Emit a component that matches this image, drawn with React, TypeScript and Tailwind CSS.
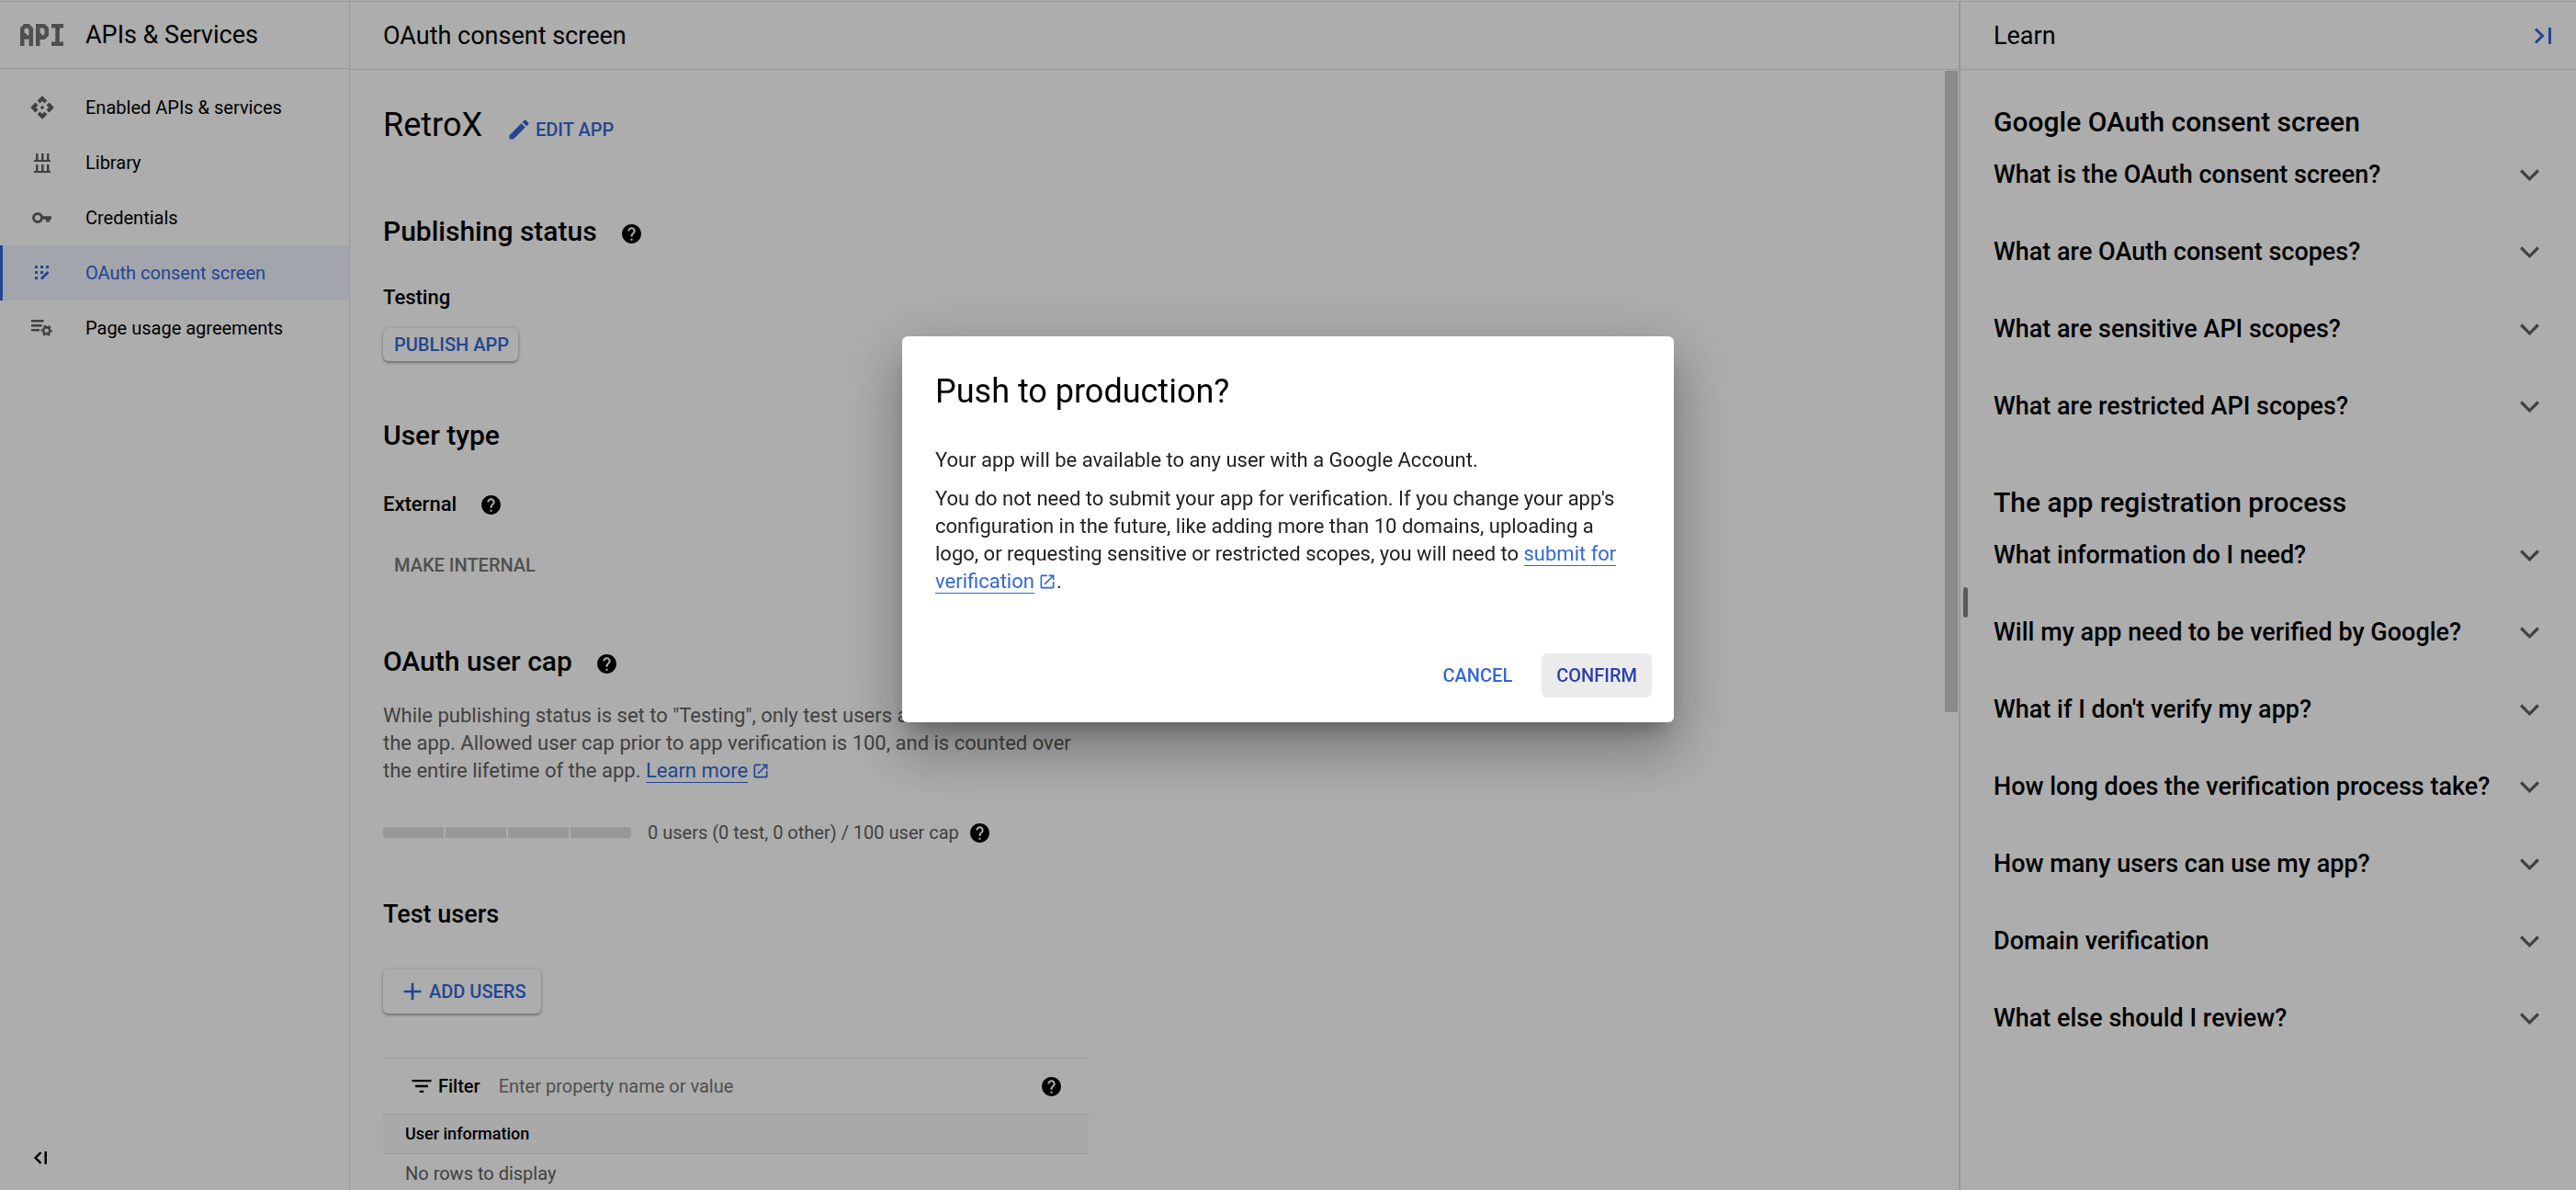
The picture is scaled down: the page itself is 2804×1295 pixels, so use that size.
import { useState } from 'react'
import type { ReactNode } from 'react'
import { MdApi, MdAdd, MdEdit, MdFilterList, MdHelp, MdOpenInNew } from 'react-icons/md'

function ApiLogo() {
  return (
    <svg viewBox="0 0 47 24" className="h-6 w-[47px] text-[#757575]" fill="none" stroke="currentColor" strokeWidth="4.5" aria-hidden="true">
      <path d="M2.250 24V5.500l3-3.250h3.500l3 3.250V24M2.250 14.500h9.500" />
      <path d="M19.250 24V2.250h6.500l3 3v6.500l-3 3h-6.500" />
      <path d="M34 2.250h13M34 21.750h13M40.500 2v20" />
      <path d="M4.500 12.300v-3l3 3zM21.500 12.500v-3l3 3zM38.500 4.500h4v2.500z" fill="#4a4a4a" stroke="none" />
    </svg>
  )
}

function LibraryIcon() {
  return (
    <svg viewBox="0 0 18 21" className="h-[21px] w-[18px]" fill="currentColor" aria-hidden="true">
      <path d="M2 0h2.500v7H8V0h2.500v7H14V0h2.500v7H18v2H0V7h2zM2 12h2.500v7H8v-7h2.500v7H14v-7h2.500v7H18v2H0v-2h2z" />
    </svg>
  )
}

function KeyIcon() {
  return (
    <svg viewBox="0 0 21 12" className="h-3 w-[21px]" fill="currentColor" aria-hidden="true">
      <circle cx="6" cy="6" r="4.500" fill="none" stroke="currentColor" strokeWidth="3" />
      <path d="M11 4.300h10v3.500h-1.700V10.500H15V7.800h-4z" />
    </svg>
  )
}

function ConsentIcon() {
  return (
    <svg viewBox="0 0 16 16" className="size-4" fill="currentColor" aria-hidden="true">
      <path d="M0 0h3v3H0zM6 0h3v3H6zM12 0h3v3h-3zM0 6h3v3H0zM6 6h3v3H6zM0 12h3v3H0z" />
      <path d="M6.500 13l7-7 2 2-7 7h-2z" />
    </svg>
  )
}

function AgreementsIcon() {
  return (
    <svg viewBox="0 0 23 18" className="h-[18px] w-[23px]" fill="currentColor" aria-hidden="true">
      <path d="M0 0h13.500v2.400H0zM0 5h11.500v2.400H0zM0 10h9v2.400H0z" />
      <circle cx="16.700" cy="11.800" r="3.500" fill="none" stroke="currentColor" strokeWidth="2.400" />
      <circle cx="16.700" cy="11.800" r="5.200" fill="none" stroke="currentColor" strokeWidth="1.800" strokeDasharray="2.900 2.545" strokeDashoffset="1.450" />
    </svg>
  )
}

function HidePanelIcon() {
  return (
    <svg viewBox="0 0 20 18" className="h-[18px] w-5" fill="none" stroke="currentColor" strokeWidth="3" aria-hidden="true">
      <path d="M2 1.500L9.500 9 2 16.500M17.500 0v18" />
    </svg>
  )
}

function CollapseMenuIcon() {
  return (
    <svg viewBox="0 0 14 14" className="size-3.5" fill="none" stroke="currentColor" strokeWidth="2.500" aria-hidden="true">
      <path d="M7.500 1L1.700 7l5.800 6M12.700 0v14" />
    </svg>
  )
}

function ChevronDown() {
  return (
    <svg viewBox="0 0 21 13" className="h-[13px] w-[21px] text-[#616161]" fill="none" stroke="currentColor" strokeWidth="3.200" aria-hidden="true">
      <path d="M1.200 1.500l9.300 9.300 9.300-9.300" />
    </svg>
  )
}

const navItems: { label: string; icon: ReactNode; active?: boolean }[] = [
  { label: 'Enabled APIs & services', icon: <MdApi className="size-7" /> },
  { label: 'Library', icon: <LibraryIcon /> },
  { label: 'Credentials', icon: <KeyIcon /> },
  { label: 'OAuth consent screen', icon: <ConsentIcon />, active: true },
  { label: 'Page usage agreements', icon: <AgreementsIcon /> },
]

const learnSections = [
  {
    title: 'Google OAuth consent screen',
    questions: [
      'What is the OAuth consent screen?',
      'What are OAuth consent scopes?',
      'What are sensitive API scopes?',
      'What are restricted API scopes?',
    ],
  },
  {
    title: 'The app registration process',
    questions: [
      'What information do I need?',
      'Will my app need to be verified by Google?',
      "What if I don't verify my app?",
      'How long does the verification process take?',
      'How many users can use my app?',
      'Domain verification',
      'What else should I review?',
    ],
  },
]

function Help({ label }: { label: string }) {
  return (
    <button type="button" aria-label={label} className="shrink-0">
      <MdHelp className="size-[25px]" />
    </button>
  )
}

function SectionHeading({ children, help }: { children: ReactNode; help: string }) {
  return (
    <div className="flex h-11 items-center gap-[25px]">
      <h3 className="text-[30px] leading-11 font-medium">{children}</h3>
      <div className="flex pt-1">
        <Help label={help} />
      </div>
    </div>
  )
}

function ExternalLink({ children }: { children: ReactNode }) {
  return (
    <a href="#" className="text-[#3367d6]">
      <span className="border-b border-[#3367d6]">{children}</span>
      <MdOpenInNew className="ml-1 inline size-5 align-[-3px]" />
    </a>
  )
}

function Sidebar() {
  return (
    <aside className="flex w-[381px] shrink-0 flex-col border-r border-[#e0e0e0]">
      <div className="flex h-[73px] shrink-0 items-center gap-6 border-b border-[#e0e0e0] pl-[22px]">
        <ApiLogo />
        <span className="text-[27px] leading-9">APIs &amp; Services</span>
      </div>
      <nav className="flex flex-col pt-3">
        {navItems.map((item) => (
          <a
            key={item.label}
            href="#"
            aria-current={item.active ? 'page' : undefined}
            className={
              item.active
                ? 'flex h-15 items-center border-l-3 border-[#3367d6] bg-[#f0f4ff] text-[#3367d6]'
                : 'flex h-15 items-center border-l-3 border-transparent'
            }
          >
            <span className={item.active ? 'flex w-[90px] justify-center pr-[5px]' : 'flex w-[90px] justify-center pr-[5px] text-[#616161]'}>
              {item.icon}
            </span>
            <span className="text-[20px] leading-7">{item.label}</span>
          </a>
        ))}
      </nav>
      <button type="button" aria-label="Collapse menu" className="mt-auto mb-7 ml-[37px] self-start">
        <CollapseMenuIcon />
      </button>
    </aside>
  )
}

function LearnPanel() {
  return (
    <aside className="relative flex w-[672px] shrink-0 flex-col border-l-2 border-[#e0e0e0]">
      <div className="absolute top-[637px] left-[3px] h-[33px] w-[5px] rounded-full bg-[#80868b]" />
      <header className="flex h-[74px] shrink-0 items-center justify-between border-b border-[#e0e0e0] pr-[26px] pl-9">
        <h2 className="text-[27px] leading-9">Learn</h2>
        <button type="button" aria-label="Hide panel" className="text-[#3367d6]">
          <HidePanelIcon />
        </button>
      </header>
      <div className="flex flex-col gap-5 pt-9 pr-10 pl-9">
        {learnSections.map((section) => (
          <section key={section.title}>
            <h3 className="text-[30px] leading-[42px] font-medium">{section.title}</h3>
            <ul className="pt-4">
              {section.questions.map((q) => (
                <li key={q} className="h-21">
                  <button type="button" className="flex w-full items-center justify-between py-1 text-left text-[27px] leading-8 font-medium">
                    {q}
                    <ChevronDown />
                  </button>
                </li>
              ))}
            </ul>
          </section>
        ))}
      </div>
    </aside>
  )
}

const raised = 'rounded-md bg-white shadow-[0_2px_3px_rgba(0,0,0,0.3),0_0_4px_rgba(0,0,0,0.15)]'

function Consent() {
  return (
    <main className="flex min-w-0 flex-1 flex-col">
      <header className="flex h-[74px] shrink-0 items-center border-b border-[#e0e0e0] pl-9">
        <h1 className="text-[27px] leading-9">OAuth consent screen</h1>
      </header>
      <div className="flex min-h-0 flex-1">
        <div className="flex w-[804px] flex-col pl-9 *:shrink-0">
          <div className="mt-9 flex h-12 items-center gap-[26px]">
            <h2 className="text-[36px] leading-12">RetroX</h2>
            <button type="button" className="flex items-center gap-1 pt-2.5 text-[20px] leading-7 font-medium text-[#3367d6]">
              <MdEdit className="size-7" />
              EDIT APP
            </button>
          </div>

          <div className="mt-[70px]">
            <SectionHeading help="About publishing status">Publishing status</SectionHeading>
          </div>
          <p className="mt-[34px] text-[22px] leading-8 font-medium">Testing</p>
          <button type="button" className={`mt-[17px] flex h-9 items-center self-start pr-2.5 pl-3 text-[20px] font-medium text-[#3367d6] ${raised}`}>
            PUBLISH APP
          </button>

          <h3 className="mt-[59px] text-[30px] leading-11 font-medium">User type</h3>
          <div className="mt-[37px] flex h-8 items-center gap-[25px]">
            <p className="text-[22px] leading-8 font-medium">External</p>
            <Help label="About user type" />
          </div>
          <button type="button" disabled className="mt-8 flex h-9 items-center self-start pr-2.5 pl-3 text-[20px] font-medium text-[#757575]">
            MAKE INTERNAL
          </button>

          <div className="mt-[65px]">
            <SectionHeading help="About the user cap">OAuth user cap</SectionHeading>
          </div>
          <p className="mt-[22px] text-[22px] leading-[30px] text-[#616161]">
            While publishing status is set to "Testing", only test users are able to access the app. Allowed user cap
            prior to app verification is 100, and is counted over the entire lifetime of the app.{' '}
            <ExternalLink>Learn more</ExternalLink>
          </p>
          <div className="mt-9 flex h-8 items-center">
            <div className="flex h-3 w-[270px] gap-[2px] overflow-hidden rounded" role="img" aria-label="0 of 100 users">
              <span className="flex-1 bg-[#e0e0e0]" />
              <span className="flex-1 bg-[#e0e0e0]" />
              <span className="flex-1 bg-[#e0e0e0]" />
              <span className="flex-1 bg-[#e0e0e0]" />
            </div>
            <span className="mr-2.5 ml-[18px] text-[20px] leading-7 text-[#616161]">0 users (0 test, 0 other) / 100 user cap</span>
            <Help label="About user counts" />
          </div>

          <h3 className="mt-[55px] text-[27px] leading-9 font-medium">Test users</h3>
          <button type="button" className={`mt-[42px] flex h-12 items-center gap-0.5 self-start px-4 text-[20px] font-medium text-[#3367d6] ${raised}`}>
            <MdAdd className="size-8" />
            ADD USERS
          </button>

          <div className="mt-12 flex w-[768px] flex-col border-t border-[#e0e0e0]">
            <div className="flex h-15 items-center px-7">
              <MdFilterList className="size-7" />
              <label htmlFor="filter" className="ml-1 text-[20px] leading-7 font-medium">
                Filter
              </label>
              <input
                id="filter"
                type="text"
                placeholder="Enter property name or value"
                className="ml-5 h-9 min-w-0 flex-1 bg-transparent text-[20px] outline-none placeholder:text-[#757575]"
              />
              <Help label="About filtering" />
            </div>
            <table className="w-full text-left">
              <thead>
                <tr className="border-y border-[#e0e0e0] bg-[#fafafa]">
                  <th className="h-[43px] pl-6 text-[18px] leading-6 font-medium">User information</th>
                </tr>
              </thead>
              <tbody>
                <tr>
                  <td className="h-[43px] pl-6 text-[20px] leading-7 text-[#616161]">No rows to display</td>
                </tr>
              </tbody>
            </table>
          </div>
        </div>
        <div className="mt-px mr-px ml-auto h-[698px] w-[14px] bg-[#cccccc]" />
      </div>
    </main>
  )
}

function ProductionDialog({ onClose }: { onClose: () => void }) {
  return (
    <div className="fixed inset-0 flex items-start justify-center bg-black/32">
      <div
        role="dialog"
        aria-modal="true"
        aria-labelledby="dialog-title"
        className="mt-[366px] flex w-[840px] flex-col rounded-md bg-white pt-9 pr-6 pb-[27px] pl-9 shadow-[0_16px_22px_-10px_rgba(0,0,0,0.3),0_36px_57px_5px_rgba(0,0,0,0.16),0_14px_69px_12px_rgba(0,0,0,0.14)]"
      >
        <h2 id="dialog-title" className="text-[36px] leading-12">
          Push to production?
        </h2>
        <p className="mt-9 pr-3 text-[22px] leading-[30px] text-[#212121]">
          Your app will be available to any user with a Google Account.
        </p>
        <p className="mt-3 pr-3 text-[22px] leading-[30px] text-[#212121]">
          You do not need to submit your app for verification. If you change your app's configuration in the future, like
          adding more than 10 domains, uploading a logo, or requesting sensitive or restricted scopes, you will need to{' '}
          <ExternalLink>submit for verification</ExternalLink>.
        </p>
        <div className="mt-[63px] flex justify-end gap-4 text-[20px] font-medium">
          <button type="button" onClick={onClose} className="h-12 rounded-md px-4 text-[#3367d6]">
            CANCEL
          </button>
          <button type="button" onClick={onClose} className="h-12 rounded-md bg-[#ebebeb] px-4 text-[#2a3eb1]">
            CONFIRM
          </button>
        </div>
      </div>
    </div>
  )
}

export default function App() {
  const [open, setOpen] = useState(true)
  return (
    <div className="h-screen overflow-hidden bg-white pt-px font-[Roboto,sans-serif] text-black">
      <div className="flex h-full border-t border-[#e0e0e0]">
        <Sidebar />
        <Consent />
        <LearnPanel />
      </div>
      {open && <ProductionDialog onClose={() => setOpen(false)} />}
    </div>
  )
}
